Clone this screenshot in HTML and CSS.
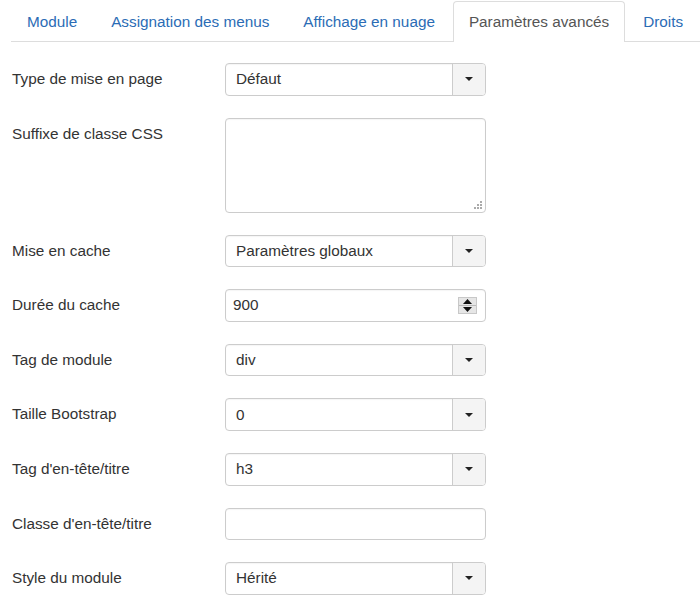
FILE: index.html
```html
<!DOCTYPE html>
<html lang="fr">
<head>
<meta charset="utf-8">
<title>Paramètres avancés</title>
<link rel="stylesheet" href="styles.css">
</head>
<body>
<div class="page">
  <ul class="tabs">
    <li class="tab"><a>Module</a></li>
    <li class="tab"><a>Assignation des menus</a></li>
    <li class="tab"><a>Affichage en nuage</a></li>
    <li class="tab active"><a>Paramètres avancés</a></li>
    <li class="tab"><a>Droits</a></li>
  </ul>
  <div class="form">
    <div class="row">
      <div class="label">Type de mise en page</div>
      <div class="select"><span class="value">Défaut</span><span class="btn"><span class="caret"></span></span></div>
    </div>
    <div class="row">
      <div class="label">Suffixe de classe CSS</div>
      <div class="textarea">
        <svg class="grip" width="9" height="9" viewBox="0 0 9 9">
          <rect x="6" y="0" width="2" height="2" fill="#aaa"/>
          <rect x="3" y="3" width="2" height="2" fill="#aaa"/>
          <rect x="6" y="3" width="2" height="2" fill="#aaa"/>
          <rect x="0" y="6" width="2" height="2" fill="#aaa"/>
          <rect x="3" y="6" width="2" height="2" fill="#aaa"/>
          <rect x="6" y="6" width="2" height="2" fill="#aaa"/>
        </svg>
      </div>
    </div>
    <div class="row">
      <div class="label">Mise en cache</div>
      <div class="select"><span class="value">Paramètres globaux</span><span class="btn"><span class="caret"></span></span></div>
    </div>
    <div class="row">
      <div class="label">Durée du cache</div>
      <div class="input number"><span class="value num">900</span>
        <span class="spin">
          <span class="spin-half"><svg width="9" height="5" viewBox="0 0 9 5"><path d="M0 5 L4.5 0 L9 5 Z" fill="#111"/></svg></span>
          <span class="spin-half"><svg width="9" height="5" viewBox="0 0 9 5"><path d="M0 0 L4.5 5 L9 0 Z" fill="#111"/></svg></span>
        </span>
      </div>
    </div>
    <div class="row">
      <div class="label">Tag de module</div>
      <div class="select"><span class="value">div</span><span class="btn"><span class="caret"></span></span></div>
    </div>
    <div class="row">
      <div class="label">Taille Bootstrap</div>
      <div class="select"><span class="value">0</span><span class="btn"><span class="caret"></span></span></div>
    </div>
    <div class="row">
      <div class="label">Tag d'en-tête/titre</div>
      <div class="select"><span class="value">h3</span><span class="btn"><span class="caret"></span></span></div>
    </div>
    <div class="row">
      <div class="label">Classe d'en-tête/titre</div>
      <div class="input"></div>
    </div>
    <div class="row">
      <div class="label">Style du module</div>
      <div class="select"><span class="value">Hérité</span><span class="btn"><span class="caret"></span></span></div>
    </div>
  </div>
</div>
</body>
</html>
```

FILE: styles.css
```css
html, body {
  margin: 0;
  padding: 0;
  background: #fff;
}
body {
  font-family: "Liberation Sans", Arial, sans-serif;
  font-size: 15.3px;
  color: #333;
}
.page {
  padding: 1px 0 0 11px;
}
.tabs {
  list-style: none;
  margin: 0;
  padding: 0;
  display: flex;
  border-bottom: 1px solid #ddd;
  height: 40px;
}
.tab {
  margin-right: 2px;
  margin-bottom: -1px;
}
.tab a {
  display: flex;
  align-items: center;
  height: 39px;
  padding: 0 15px;
  border: 1px solid transparent;
  border-bottom: none;
  border-radius: 4px 4px 0 0;
  color: #2b6cb5;
  white-space: nowrap;
}
.tab.active a {
  border-color: #ddd;
  background: #fff;
  color: #555;
  height: 40px;
}
.form {
  padding-top: 21px;
  display: flex;
  flex-direction: column;
  gap: 22px;
}
.row {
  display: flex;
  align-items: flex-start;
}
.label {
  width: 213px;
  flex: none;
  line-height: 32.6px;
  padding-left: 1px;
  color: #333;
}
.select, .input, .textarea {
  box-sizing: border-box;
  width: 261px;
  border: 1px solid #ccc;
  border-radius: 4px;
  background: #fff;
  box-shadow: inset 0 1px 1px rgba(0,0,0,0.04);
}
.select {
  height: 32.6px;
  display: flex;
  align-items: stretch;
}
.select .value {
  flex: 1;
  display: flex;
  align-items: center;
  padding-left: 10px;
  color: #333;
}
.select .btn {
  width: 32px;
  border-left: 1px solid #ccc;
  background: #f4f4f4;
  border-radius: 0 3px 3px 0;
  display: flex;
  align-items: center;
  justify-content: center;
}
.caret {
  width: 0;
  height: 0;
  border-left: 4.5px solid transparent;
  border-right: 4.5px solid transparent;
  border-top: 4.5px solid #222;
}
.input {
  height: 32.6px;
  display: flex;
  align-items: center;
}
.input .num {
  flex: 1;
  padding-left: 7px;
  color: #333;
}
.spin {
  display: flex;
  flex-direction: column;
  width: 19px;
  height: 17px;
  margin-right: 8px;
  background: #e6e6e6;
  border: 1px solid #c8c8c8;
  box-sizing: border-box;
}
.spin-half {
  flex: 1;
  display: flex;
  align-items: center;
  justify-content: center;
}
.spin-half + .spin-half {
  border-top: 1px solid #bbb;
}
.textarea {
  height: 95px;
  position: relative;
}
.grip {
  position: absolute;
  right: 2px;
  bottom: 2px;
}
```
